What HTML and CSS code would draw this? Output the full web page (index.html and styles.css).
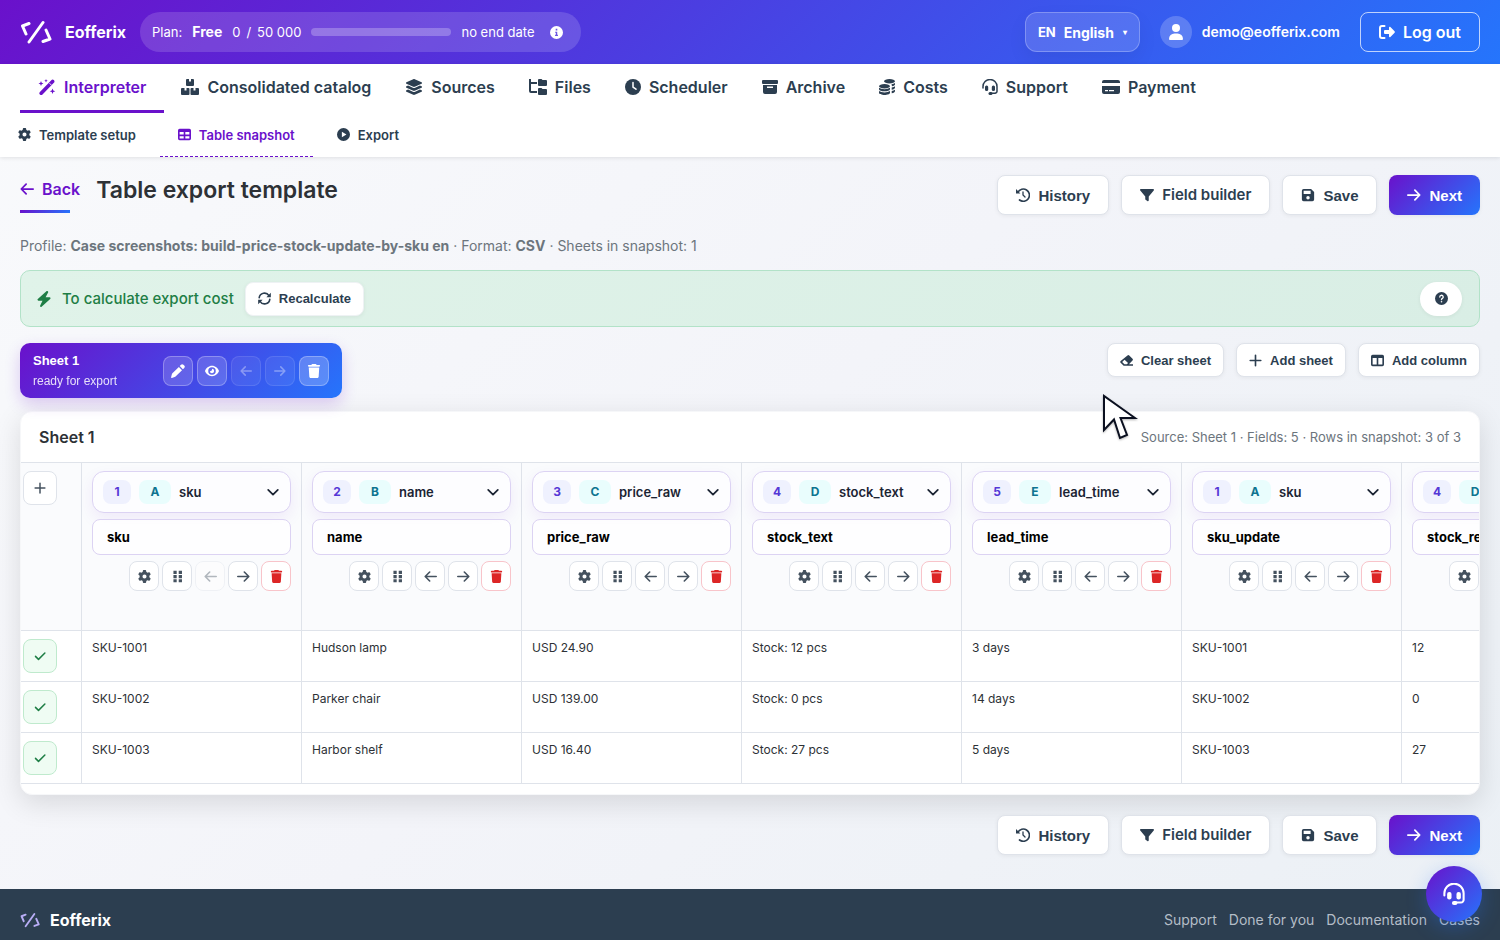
FILE: index.html
```html
<!DOCTYPE html>
<html lang="en">
<head>
    <meta charset="UTF-8">
    <meta name="viewport" content="width=device-width, initial-scale=1.0">
    <title>Table export template - Eofferix</title>
    <link rel="stylesheet" href="styles.css">
</head>
<body>
    <!-- Icon set -->
    <svg class="sprite" aria-hidden="true">
        <symbol id="i-logo" viewBox="0 0 32 24"><path d="M9 3.5L2.5 6L6 14M9 22L23 2.5M26 10L30 19L23 21.5" fill="none" stroke="currentColor" stroke-width="3" stroke-linecap="round" stroke-linejoin="round"/></symbol>
        <symbol id="i-wand" viewBox="0 0 18 16"><path d="M3.2 14.3L14.6 2.4" stroke="currentColor" stroke-width="3.6" stroke-linecap="round"/><path d="M11.6 4.3l1.6 1.6" stroke="#fff" stroke-width="1"/><path d="M3 2l.7 1.8 1.8.7-1.8.7L3 7l-.7-1.8L.5 4.5l1.8-.7zM8 0l.5 1.2 1.2.5-1.2.5L8 3.4l-.5-1.2-1.2-.5 1.2-.5zM14.5 9.5l.8 2 2 .8-2 .8-.8 2-.8-2-2-.8 2-.8z"/></symbol>
        <symbol id="i-boxes" viewBox="0 0 18 16"><path d="M5 1a1 1 0 0 1 1-1h2v2.5h2V0h2a1 1 0 0 1 1 1v5a1 1 0 0 1-1 1H6a1 1 0 0 1-1-1zM0 10a1 1 0 0 1 1-1h2.500v2.500h2V9H7.500a1 1 0 0 1 1 1v5a1 1 0 0 1-1 1H1a1 1 0 0 1-1-1zM9.500 10a1 1 0 0 1 1-1h2v2.500h2V9H17a1 1 0 0 1 1 1v5a1 1 0 0 1-1 1h-6.500a1 1 0 0 1-1-1z"/></symbol>
        <symbol id="i-layers" viewBox="0 0 576 512"><path d="M264.5 5.2c14.9-6.9 32.1-6.9 47 0l218.6 101c8.5 3.9 13.9 12.4 13.9 21.8s-5.4 17.9-13.9 21.8l-218.6 101c-14.9 6.9-32.1 6.9-47 0L45.9 149.8C37.4 145.8 32 137.3 32 128s5.4-17.9 13.9-21.8L264.5 5.2zM476.9 209.6l53.2 24.6c8.5 3.9 13.9 12.4 13.9 21.8s-5.4 17.9-13.9 21.8l-218.6 101c-14.9 6.9-32.1 6.9-47 0L45.9 277.8C37.4 273.8 32 265.3 32 256s5.4-17.9 13.9-21.8l53.2-24.6 152 70.2c23.4 10.8 50.4 10.8 73.8 0l152-70.2zm-152 198.2l152-70.2 53.2 24.6c8.5 3.9 13.9 12.4 13.9 21.8s-5.4 17.9-13.9 21.8l-218.6 101c-14.9 6.9-32.1 6.9-47 0L45.9 405.8C37.4 401.8 32 393.3 32 384s5.4-17.9 13.9-21.8l53.2-24.6 152 70.2c23.4 10.8 50.4 10.8 73.8 0z"/></symbol>
        <symbol id="i-tree" viewBox="0 0 18 16"><path d="M1 0v12a1 1 0 0 0 1 1h6M1 4h7" fill="none" stroke="currentColor" stroke-width="2"/><path d="M9 1a1 1 0 0 1 1-1h2.500l1 1H17a1 1 0 0 1 1 1v4a1 1 0 0 1-1 1h-7a1 1 0 0 1-1-1zM9 10a1 1 0 0 1 1-1h2.500l1 1H17a1 1 0 0 1 1 1v4a1 1 0 0 1-1 1h-7a1 1 0 0 1-1-1z"/></symbol>
        <symbol id="i-clock" viewBox="0 0 16 16"><circle cx="8" cy="8" r="8"/><path d="M8 3.500V8l3 2.200" fill="none" stroke="#fff" stroke-width="1.5" stroke-linecap="round"/></symbol>
        <symbol id="i-archive" viewBox="0 0 16 16"><rect y="1" width="16" height="4" rx="1"/><path fill-rule="evenodd" d="M1 6h14v7a2 2 0 0 1-2 2H3a2 2 0 0 1-2-2zM5 7.500v1.500h6V7.500z"/></symbol>
        <symbol id="i-coins" viewBox="0 0 16 16"><ellipse cx="10.5" cy="2.2" rx="5.5" ry="2.2"/><path d="M12.500 5.200c1.500-.2 2.700-.7 3.500-1.200v1.500c0 .8-1.200 1.500-3 1.800zM12.700 8.600c1.300-.3 2.500-.7 3.300-1.300v1.500c0 .8-1.300 1.600-3.300 2zM12.700 12c1.300-.3 2.500-.7 3.300-1.300v1.500c0 .8-1.300 1.600-3.300 2z"/><ellipse cx="5.5" cy="7.2" rx="5.5" ry="2.2"/><path d="M0 8.800c2.500 1.900 8.500 1.900 11 0v1.500c0 2.700-11 2.700-11 0zM0 12c2.500 1.900 8.500 1.900 11 0v1.800c0 2.900-11 2.900-11 0z"/></symbol>
        <symbol id="i-headset" viewBox="0 0 16 16"><path d="M1 9V7.500a7 7 0 0 1 14 0V12a2 2 0 0 1-2 2.200H9" fill="none" stroke="currentColor" stroke-width="1.5" stroke-linecap="round"/><rect x="3" y="6.500" width="3.200" height="5.500" rx="1.5"/><rect x="9.800" y="6.500" width="3.200" height="5.500" rx="1.5"/><rect x="6.500" y="13" width="4" height="3" rx="1.5"/></symbol>
        <symbol id="i-card" viewBox="0 0 18 16"><path fill-rule="evenodd" d="M2 1h14a2 2 0 0 1 2 2v1H0V3a2 2 0 0 1 2-2zM0 7h18v6a2 2 0 0 1-2 2H2a2 2 0 0 1-2-2zM3 11v1.200h3V11zM7 11v1.200h5V11z"/></symbol>
        <symbol id="i-gear" viewBox="0 0 512 512"><path d="M495.9 166.6c3.2 8.7 .5 18.4-6.4 24.6l-43.3 39.4c1.1 8.3 1.7 16.8 1.7 25.4s-.6 17.1-1.7 25.4l43.3 39.4c6.9 6.2 9.6 15.9 6.4 24.6c-4.4 11.9-9.7 23.3-15.8 34.3l-4.7 8.1c-6.6 11-14 21.4-22.1 31.2c-5.9 7.2-15.7 9.6-24.5 6.8l-55.7-17.7c-13.4 10.3-28.2 18.9-44 25.4l-12.5 57.1c-2 9.1-9 16.3-18.2 17.8c-13.8 2.3-28 3.5-42.5 3.5s-28.7-1.2-42.5-3.5c-9.2-1.5-16.2-8.7-18.2-17.8l-12.5-57.1c-15.8-6.5-30.6-15.1-44-25.4L83.1 425.9c-8.8 2.8-18.6 .3-24.5-6.8c-8.1-9.8-15.5-20.2-22.1-31.2l-4.7-8.1c-6.1-11-11.4-22.4-15.8-34.3c-3.2-8.7-.5-18.4 6.4-24.6l43.3-39.4C64.6 273.1 64 264.6 64 256s.6-17.1 1.7-25.4L22.4 191.2c-6.9-6.2-9.6-15.9-6.4-24.6c4.4-11.9 9.7-23.3 15.8-34.3l4.7-8.1c6.6-11 14-21.4 22.1-31.2c5.9-7.2 15.7-9.6 24.5-6.8l55.7 17.7c13.4-10.3 28.2-18.9 44-25.4l12.5-57.1c2-9.1 9-16.3 18.2-17.8C227.3 1.2 241.5 0 256 0s28.7 1.2 42.5 3.5c9.2 1.5 16.2 8.7 18.2 17.8l12.5 57.1c15.8 6.5 30.6 15.1 44 25.4l55.7-17.7c8.8-2.8 18.6-.3 24.5 6.8c8.1 9.8 15.5 20.2 22.1 31.2l4.7 8.1c6.1 11 11.4 22.4 15.8 34.3zM256 336a80 80 0 1 0 0-160 80 80 0 1 0 0 160z"/></symbol>
        <symbol id="i-table" viewBox="0 0 16 16"><path fill-rule="evenodd" d="M2 1h12a2 2 0 0 1 2 2v10a2 2 0 0 1-2 2H2a2 2 0 0 1-2-2V3a2 2 0 0 1 2-2zM2 5v3h5V5zM9 5v3h5V5zM2 10v3h5v-3zM9 10v3h5v-3z"/></symbol>
        <symbol id="i-columns" viewBox="0 0 16 16"><path fill-rule="evenodd" d="M2 1h12a2 2 0 0 1 2 2v10a2 2 0 0 1-2 2H2a2 2 0 0 1-2-2V3a2 2 0 0 1 2-2zM2 5v8h5V5zM9 5v8h5V5z"/></symbol>
        <symbol id="i-play" viewBox="0 0 16 16"><path fill-rule="evenodd" d="M8 0a8 8 0 1 1 0 16A8 8 0 0 1 8 0zM6 4.600v6.800L11.600 8z"/></symbol>
        <symbol id="i-left" viewBox="0 0 16 16"><path d="M15 8H2M7 2.500L1.500 8L7 13.500" fill="none" stroke="currentColor" stroke-width="2" stroke-linecap="round" stroke-linejoin="round"/></symbol>
        <symbol id="i-right" viewBox="0 0 16 16"><path d="M1 8h13M9 2.500L14.500 8L9 13.500" fill="none" stroke="currentColor" stroke-width="2" stroke-linecap="round" stroke-linejoin="round"/></symbol>
        <symbol id="i-history" viewBox="0 0 16 16"><path d="M2.200 4.800A7 7 0 1 1 4 13.700" fill="none" stroke="currentColor" stroke-width="1.9" stroke-linecap="round"/><path d="M0 1.200v5h5z"/><path d="M8 4.500V8l2.300 2.300" fill="none" stroke="currentColor" stroke-width="1.5" stroke-linecap="round"/></symbol>
        <symbol id="i-filter" viewBox="0 0 16 16"><path d="M1.200 1h13.600c1 0 1.500 1.100.9 1.900L10 9.700V14c0 .8-.9 1.300-1.600.8l-2-1.500a1 1 0 0 1-.4-.8V9.700L.3 2.900C-.3 2.100.2 1 1.200 1z"/></symbol>
        <symbol id="i-save" viewBox="0 0 16 16"><path fill-rule="evenodd" d="M3 1h8.500L15 4.500V13a2 2 0 0 1-2 2H3a2 2 0 0 1-2-2V3a2 2 0 0 1 2-2zM3 3.200v3.600h8V3.200zM8 9a2 2 0 1 0 0 4 2 2 0 0 0 0-4z"/></symbol>
        <symbol id="i-bolt" viewBox="0 0 14 16"><path d="M10.700.2c.5.300.6.800.4 1.300L8.600 6.300h4c.9 0 1.200 1 .6 1.600L4.600 15.700c-.9.700-1.900-.1-1.400-1.200L5.500 9.700H1.400c-.9 0-1.200-1-.6-1.600L9.400.3c.4-.4.900-.4 1.300-.1z"/></symbol>
        <symbol id="i-sync" viewBox="0 0 16 16"><path d="M1.500 7A6.500 6.500 0 0 1 13.500 4.500M14.500 9A6.500 6.500 0 0 1 2.500 11.500" fill="none" stroke="currentColor" stroke-width="2" stroke-linecap="round"/><path d="M15.800 1v5.500h-5.500zM.2 15V9.500h5.500z"/></symbol>
        <symbol id="i-help" viewBox="0 0 16 16"><circle cx="8" cy="8" r="8"/><path d="M5.900 6.200a2.100 2.100 0 1 1 3.200 1.700c-.8.400-1.100.8-1.100 1.500" fill="none" stroke="#fff" stroke-width="1.6" stroke-linecap="round"/><circle cx="8" cy="12" r="1" fill="#fff"/></symbol>
        <symbol id="i-info" viewBox="0 0 16 16"><path fill-rule="evenodd" d="M8 0a8 8 0 1 1 0 16A8 8 0 0 1 8 0zM7 3.500v2h2v-2zM6.300 7v1.400h.9v2.300h-1v1.500h3.600v-1.500h-.9V7z"/></symbol>
        <symbol id="i-pen" viewBox="0 0 16 16"><path d="M11.400.9a2 2 0 0 1 2.800 0l.9.900a2 2 0 0 1 0 2.800L13.600 6 10 2.400zM9 3.400L12.600 7l-7.400 7.300c-.3.300-.7.500-1.100.6L1 15.900c-.6.200-1.100-.4-.9-.9L1 11.800c.1-.4.300-.8.600-1.100z"/></symbol>
        <symbol id="i-eye" viewBox="0 0 16 16"><path fill-rule="evenodd" d="M8 2c3.800 0 6.700 2.800 7.900 5.600.1.300.1.500 0 .8C14.700 11.200 11.800 14 8 14S1.300 11.200.1 8.400a1 1 0 0 1 0-.8C1.300 4.800 4.200 2 8 2zM8 3.700a4.300 4.300 0 1 0 0 8.600 4.300 4.300 0 0 0 0-8.600zM8 5.500A2.500 2.500 0 1 1 5.500 8.200C7 8.500 8.300 7.200 8 5.500z"/></symbol>
        <symbol id="i-trash" viewBox="0 0 448 512"><path d="M135.2 17.7L128 32H32C14.3 32 0 46.3 0 64S14.3 96 32 96H416c17.7 0 32-14.3 32-32s-14.3-32-32-32H320l-7.2-14.3C307.4 6.8 296.3 0 284.2 0H163.8c-12.1 0-23.2 6.8-28.6 17.7zM416 128H32L53.2 467c1.6 25.3 22.6 45 47.9 45H346.9c25.3 0 46.3-19.7 47.9-45L416 128z"/></symbol>
        <symbol id="i-eraser" viewBox="0 0 16 16"><path fill-rule="evenodd" d="M9.200 1.800a1.600 1.600 0 0 1 2.200 0l4 4a1.600 1.600 0 0 1 0 2.200L11 12.500h5V14.500H4.500L.8 10.900a1.600 1.600 0 0 1 0-2.200zM5.600 7.200L2.700 9.800l2.700 2.700h3l1.500-1.300z"/></symbol>
        <symbol id="i-plus" viewBox="0 0 16 16"><path d="M8 1.500v13M1.500 8h13" stroke="currentColor" stroke-width="2" stroke-linecap="round"/></symbol>
        <symbol id="i-grip" viewBox="0 0 16 16"><path d="M3 1h4v3.800H3zM9.500 1h4v3.800h-4zM3 6.200h4V10H3zM9.500 6.200h4V10h-4zM3 11.400h4v3.800H3zM9.500 11.400h4v3.800h-4z"/></symbol>
        <symbol id="i-check" viewBox="0 0 16 16"><path d="M2 8.500l4 4L14.500 4" fill="none" stroke="currentColor" stroke-width="2" stroke-linecap="round" stroke-linejoin="round"/></symbol>
        <symbol id="i-chevron" viewBox="0 0 16 16"><path d="M2.500 5.500L8 11l5.500-5.500" fill="none" stroke="currentColor" stroke-width="2" stroke-linecap="round" stroke-linejoin="round"/></symbol>
        <symbol id="i-user" viewBox="0 0 16 16"><circle cx="8" cy="4" r="4"/><path d="M1 15a5.500 5.500 0 0 1 5.500-5.500h3A5.500 5.500 0 0 1 15 15a1 1 0 0 1-1 1H2a1 1 0 0 1-1-1z"/></symbol>
        <symbol id="i-logout" viewBox="0 0 16 16"><path d="M5.500 2H3a2 2 0 0 0-2 2v8a2 2 0 0 0 2 2h2.500" fill="none" stroke="currentColor" stroke-width="2" stroke-linecap="round"/><path d="M10 3.500c0-.8.800-1.100 1.400-.6l4.200 4.400c.4.400.4 1 0 1.400l-4.200 4.400c-.6.500-1.400.2-1.400-.6V10H6a1 1 0 0 1-1-1V7a1 1 0 0 1 1-1h4z"/></symbol>
    </svg>

    <header class="topbar">
        <a class="brand" href="#"><svg class="logo"><use href="#i-logo"/></svg>Eofferix</a>
        <div class="plan">
            <span>Plan:</span>
            <strong>Free</strong>
            <span class="usage"><span>0</span><span>/</span><span>50 000</span></span>
            <progress class="plan-bar" value="0" max="50000" aria-label="Plan usage"></progress>
            <span>no end date</span>
            <button class="plan-info" type="button" aria-label="Plan info"><svg class="icon"><use href="#i-info"/></svg></button>
        </div>
        <div class="account">
            <div class="lang">
                <label for="lang">EN</label>
                <select id="lang"><option>English</option></select>
                <span class="caret">▾</span>
            </div>
            <div class="user">
                <span class="avatar"><svg class="icon"><use href="#i-user"/></svg></span>
                <span>demo@eofferix.com</span>
            </div>
            <a class="logout" href="#"><svg class="icon"><use href="#i-logout"/></svg>Log out</a>
        </div>
    </header>

    <div class="menus">
        <nav class="main-nav">
            <a class="active" href="#"><svg class="icon wide"><use href="#i-wand"/></svg>Interpreter</a>
            <a href="#"><svg class="icon wide"><use href="#i-boxes"/></svg>Consolidated catalog</a>
            <a href="#"><svg class="icon wide"><use href="#i-layers"/></svg>Sources</a>
            <a href="#"><svg class="icon wide"><use href="#i-tree"/></svg>Files</a>
            <a href="#"><svg class="icon"><use href="#i-clock"/></svg>Scheduler</a>
            <a href="#"><svg class="icon"><use href="#i-archive"/></svg>Archive</a>
            <a href="#"><svg class="icon"><use href="#i-coins"/></svg>Costs</a>
            <a href="#"><svg class="icon"><use href="#i-headset"/></svg>Support</a>
            <a href="#"><svg class="icon wide"><use href="#i-card"/></svg>Payment</a>
        </nav>
        <nav class="sub-nav">
            <a href="#"><svg class="icon"><use href="#i-gear"/></svg>Template setup</a>
            <a class="active" href="#"><svg class="icon"><use href="#i-table"/></svg>Table snapshot</a>
            <a href="#"><svg class="icon"><use href="#i-play"/></svg>Export</a>
        </nav>
    </div>

    <main>
        <div class="page-head">
            <a class="back" href="#"><svg class="icon"><use href="#i-left"/></svg>Back</a>
            <h1>Table export template</h1>
            <div class="actions">
                <button class="btn" type="button"><svg class="icon"><use href="#i-history"/></svg>History</button>
                <a class="btn btn-link" href="#"><svg class="icon"><use href="#i-filter"/></svg>Field builder</a>
                <button class="btn" type="button"><svg class="icon"><use href="#i-save"/></svg>Save</button>
                <button class="btn btn-primary" type="button"><svg class="icon"><use href="#i-right"/></svg>Next</button>
            </div>
        </div>

        <p class="profile">Profile: <strong>Case screenshots: build-price-stock-update-by-sku en</strong> · Format: <strong>CSV</strong> · Sheets in snapshot: 1</p>

        <section class="cost">
            <svg class="icon"><use href="#i-bolt"/></svg>
            <span>To calculate export cost</span>
            <button class="btn btn-small" type="button"><svg class="icon"><use href="#i-sync"/></svg>Recalculate</button>
            <button class="help" type="button" aria-label="Help"><svg class="icon"><use href="#i-help"/></svg></button>
        </section>

        <div class="sheet-bar">
            <div class="sheet-tab">
                <div class="sheet-name">
                    <strong>Sheet 1</strong>
                    <span>ready for export</span>
                </div>
                <div class="sheet-tools">
                    <button type="button" aria-label="Rename"><svg class="icon"><use href="#i-pen"/></svg></button>
                    <button type="button" aria-label="Show"><svg class="icon"><use href="#i-eye"/></svg></button>
                    <button type="button" aria-label="Move left" disabled><svg class="icon"><use href="#i-left"/></svg></button>
                    <button type="button" aria-label="Move right" disabled><svg class="icon"><use href="#i-right"/></svg></button>
                    <button class="light" type="button" aria-label="Delete"><svg class="icon"><use href="#i-trash"/></svg></button>
                </div>
            </div>
            <div class="actions">
                <button class="btn btn-small" type="button"><svg class="icon"><use href="#i-eraser"/></svg>Clear sheet</button>
                <button class="btn btn-small" type="button"><svg class="icon"><use href="#i-plus"/></svg>Add sheet</button>
                <button class="btn btn-small" type="button"><svg class="icon"><use href="#i-columns"/></svg>Add column</button>
            </div>
        </div>

        <section class="card">
            <div class="card-head">
                <h2>Sheet 1</h2>
                <span>Source: Sheet 1 · Fields: 5 · Rows in snapshot: 3 of 3</span>
            </div>
            <div class="table-wrap">
                <table>
                    <thead>
                        <tr id="columns">
                            <th class="row-tool"><button class="square" type="button" aria-label="Add row"><svg class="icon"><use href="#i-plus"/></svg></button></th>
                        </tr>
                    </thead>
                    <tbody id="rows"></tbody>
                </table>
            </div>
        </section>

        <div class="actions bottom">
            <button class="btn" type="button"><svg class="icon"><use href="#i-history"/></svg>History</button>
            <a class="btn btn-link" href="#"><svg class="icon"><use href="#i-filter"/></svg>Field builder</a>
            <button class="btn" type="button"><svg class="icon"><use href="#i-save"/></svg>Save</button>
            <button class="btn btn-primary" type="button"><svg class="icon"><use href="#i-right"/></svg>Next</button>
        </div>
    </main>

    <footer>
        <a class="foot-brand" href="#"><svg class="logo"><use href="#i-logo"/></svg>Eofferix</a>
        <nav>
            <a href="#">Support</a>
            <a href="#">Done for you</a>
            <a href="#">Documentation</a>
            <a href="#">Cases</a>
        </nav>
    </footer>

    <button class="chat" type="button" aria-label="Support chat"><svg class="icon"><use href="#i-headset"/></svg></button>
    <svg class="pointer" viewBox="0 0 36 48" aria-hidden="true"><path d="M2 2V36L12 25.5L18 44L25 41L18.5 24H33Z" fill="#fff" stroke="#0b1020" stroke-width="2"/></svg>

    <script src="app.js"></script>
</body>
</html>
```

FILE: styles.css
```css
* {
    box-sizing: border-box;
}
body {
    margin: 0;
    min-height: 100vh;
    display: flex;
    flex-direction: column;
    font-family: Inter, sans-serif;
    font-size: 14px;
    line-height: 20px;
    color: #2d3136;
    background: linear-gradient(135deg, #f9fafc 0%, #f3f4f9 50%, #ebf0f5 100%);
}
a {
    color: inherit;
    text-decoration: none;
}
button, select, input {
    font-family: "Liberation Sans", Arial, sans-serif;
    margin: 0;
}
button {
    cursor: pointer;
}
.sprite {
    display: none;
}
.icon {
    width: 16px;
    height: 16px;
    flex: none;
    fill: currentColor;
}
.icon.wide {
    width: 18px;
}

/* Top bar */
.topbar {
    display: flex;
    align-items: center;
    gap: 14px;
    height: 64px;
    padding: 0 20px;
    color: #fff;
    background: linear-gradient(135deg, #6a11cb 0%, #2575fc 100%);
}
.brand, .foot-brand {
    display: flex;
    align-items: center;
    gap: 13px;
    font-size: 16px;
    font-weight: 700;
}
.logo {
    width: 32px;
    height: 24px;
}
.plan {
    display: flex;
    align-items: center;
    gap: 10px;
    height: 40px;
    padding: 0 12px;
    border-radius: 20px;
    background: rgba(255, 255, 255, 0.15);
    font-size: 13px;
}
.plan strong {
    font-size: 14px;
}
.usage {
    display: flex;
    gap: 6px;
}
.plan-bar {
    appearance: none;
    width: 140px;
    height: 8px;
    border: none;
    border-radius: 4px;
    overflow: hidden;
    background: rgba(255, 255, 255, 0.25);
}
.plan-bar::-webkit-progress-bar {
    background: transparent;
}
.plan-bar::-webkit-progress-value {
    background: #fff;
}
.plan-info {
    display: flex;
    padding: 6px;
    border: none;
    color: #fff;
    background: none;
}
.plan-info .icon {
    width: 13px;
    height: 13px;
}
.account {
    display: flex;
    align-items: center;
    gap: 20px;
    margin-left: auto;
    font-weight: 600;
}
.lang {
    display: flex;
    align-items: center;
    gap: 8px;
    height: 40px;
    padding: 0 12px;
    border: 1px solid rgba(255, 255, 255, 0.25);
    border-radius: 12px;
    background: rgba(255, 255, 255, 0.14);
    box-shadow: 0 8px 20px rgba(0, 0, 0, 0.06);
}
.lang label {
    font-size: 13px;
    font-weight: 700;
}
.lang select {
    appearance: none;
    padding: 0;
    border: none;
    color: #fff;
    background: none;
    font: 700 14px Inter, sans-serif;
}
.caret {
    font-size: 8px;
}
.user {
    display: flex;
    align-items: center;
    gap: 10px;
}
.avatar {
    display: flex;
    align-items: center;
    justify-content: center;
    width: 32px;
    height: 32px;
    border-radius: 50%;
    background: rgba(255, 255, 255, 0.2);
}
.logout {
    display: flex;
    align-items: center;
    gap: 8px;
    height: 40px;
    padding: 0 18px;
    border: 1px solid rgba(255, 255, 255, 0.7);
    border-radius: 8px;
    font-size: 16px;
}

/* Menus */
.menus {
    color: #2c3e50;
    background: #fff;
    box-shadow: 0 1px 4px rgba(0, 0, 0, 0.1);
}
.main-nav {
    display: flex;
    padding: 0 20px;
    font-size: 16px;
    font-weight: 600;
}
.main-nav a {
    display: flex;
    align-items: center;
    gap: 8px;
    height: 49px;
    padding: 0 17px;
    border-bottom: 3px solid transparent;
}
.main-nav .active {
    padding: 0 18px;
}
.sub-nav {
    display: flex;
    gap: 6px;
    font-size: 13px;
    font-weight: 600;
}
.sub-nav a {
    display: flex;
    align-items: center;
    gap: 8px;
    height: 44px;
    padding: 0 18px;
    border-bottom: 1px dashed transparent;
}
.sub-nav .icon {
    width: 13px;
    height: 13px;
}
.main-nav .active, .sub-nav .active {
    color: #6a11cb;
    border-bottom-color: #6a11cb;
}

/* Page head */
main {
    padding: 18px 20px 34px;
}
.page-head {
    display: flex;
    gap: 16px;
    min-height: 61px;
}
.back {
    display: flex;
    align-items: center;
    gap: 8px;
    align-self: flex-start;
    height: 38px;
    padding-bottom: 10px;
    color: #6a11cb;
    font-size: 16px;
    font-weight: 600;
    background: linear-gradient(135deg, #6a11cb, #2575fc) left bottom / 50px 3px no-repeat;
}
.back .icon {
    width: 14px;
    height: 14px;
}
h1 {
    margin: 0;
    font-size: 23px;
    line-height: 30px;
    font-weight: 600;
}
.actions {
    display: flex;
    gap: 12px;
    align-items: flex-start;
    margin-left: auto;
}
.btn {
    display: flex;
    align-items: center;
    gap: 8px;
    height: 40px;
    padding: 0 18px;
    border: 1px solid #dfe3ea;
    border-radius: 8px;
    color: #2c3e50;
    background: #fff;
    font-size: 15px;
    font-weight: 700;
    box-shadow: 0 1px 4px rgba(0, 0, 0, 0.06);
}
.btn .icon {
    width: 14px;
    height: 14px;
}
.btn-link {
    font-weight: 600;
}
.btn-primary {
    border: none;
    color: #fff;
    background: linear-gradient(135deg, #6a11cb, #2575fc);
}
.btn-small {
    height: 34px;
    padding: 0 12px;
    font-size: 13px;
}
.btn-small .icon {
    width: 13px;
    height: 13px;
}
.profile {
    margin: 0 0 14px;
    color: #6c757d;
}

/* Cost banner */
.cost {
    display: flex;
    align-items: center;
    gap: 11px;
    height: 57px;
    padding: 0 17px 0 16px;
    border: 1px solid #b2e2c8;
    border-radius: 10px;
    color: #1e7e45;
    background: linear-gradient(135deg, #e0f3e9, #d9eee5);
    font-size: 15px;
    font-weight: 500;
}
.cost > .icon {
    width: 14px;
}
.cost .btn {
    border-color: #eef2f4;
}
.help {
    display: flex;
    align-items: center;
    justify-content: center;
    width: 42px;
    height: 34px;
    margin-left: auto;
    border: none;
    border-radius: 17px;
    color: #2c3e50;
    background: #fff;
    box-shadow: 0 1px 4px rgba(0, 0, 0, 0.06);
}
.help .icon {
    width: 13px;
    height: 13px;
}

/* Sheets */
.sheet-bar {
    display: flex;
    margin: 16px 0 13px;
}
.sheet-tab {
    display: flex;
    align-items: center;
    justify-content: space-between;
    width: 322px;
    height: 55px;
    padding: 0 13px;
    border-radius: 10px;
    color: #fff;
    background: linear-gradient(135deg, #6a11cb, #2575fc);
    box-shadow: 0 6px 16px rgba(106, 17, 203, 0.2);
    font-family: "Liberation Sans", Arial, sans-serif;
    font-size: 12px;
}
.sheet-name {
    display: flex;
    flex-direction: column;
}
.sheet-name strong {
    font-size: 13px;
}
.sheet-name span {
    opacity: 0.85;
}
.sheet-tools, .col-tools {
    display: flex;
    gap: 4px;
}
.sheet-tools button {
    display: flex;
    align-items: center;
    justify-content: center;
    width: 30px;
    height: 30px;
    padding: 0;
    border: 1px solid rgba(255, 255, 255, 0.28);
    border-radius: 8px;
    color: #fff;
    background: rgba(255, 255, 255, 0.16);
}
.sheet-tools .light {
    background: rgba(255, 255, 255, 0.22);
}
.sheet-tools button:disabled {
    opacity: 0.4;
}
.sheet-tools .icon {
    width: 14px;
    height: 14px;
}
.sheet-tools button:disabled .icon {
    width: 12px;
}

/* Table card */
.card {
    padding-bottom: 10px;
    border: 1px solid #f6f7f9;
    border-radius: 12px;
    background: #fff;
    box-shadow: 0 8px 28px rgba(0, 0, 0, 0.12);
    overflow: hidden;
}
.card-head {
    display: flex;
    align-items: center;
    justify-content: space-between;
    height: 50px;
    padding: 0 18px;
    color: #6c757d;
    font-size: 13px;
}
.card-head h2 {
    margin: 0;
    color: #2d3136;
    font-size: 16px;
    font-weight: 600;
}
.table-wrap {
    border-top: 1px solid #dfe3ea;
    overflow: hidden;
}
table {
    width: 1601px;
    table-layout: fixed;
    border-collapse: separate;
    border-spacing: 0;
    font-size: 12px;
    line-height: 18px;
}
th, td {
    padding: 8px 10px;
    border-right: 1px solid #dfe3ea;
    border-bottom: 1px solid #dfe3ea;
    text-align: left;
    vertical-align: top;
}
th {
    width: 220px;
    height: 168px;
    background: #fafbfd;
    font-weight: 400;
}
td {
    height: 51px;
}
.row-tool {
    width: 61px;
    padding: 8px 2px;
}
.square, .col-tools button {
    display: flex;
    align-items: center;
    justify-content: center;
    width: 34px;
    height: 34px;
    padding: 0;
    border: 1px solid #dfe3ea;
    border-radius: 8px;
    color: #45525f;
    background: #fff;
}
.square .icon {
    width: 12px;
    height: 12px;
}
.square.ok {
    border-color: #bfeacd;
    color: #1e7e45;
    background: #effcf3;
}
.field {
    display: flex;
    align-items: center;
    gap: 8px;
    height: 42px;
    padding: 0 10px;
    border: 1px solid #dcd3f3;
    border-radius: 12px;
    color: #1b2433;
    background: #fdfdff;
    box-shadow: 0 6px 16px rgba(106, 17, 203, 0.07);
}
.badge {
    width: 28px;
    height: 24px;
    border-radius: 8px;
    color: #5538d6;
    background: #eff1fe;
    font-weight: 700;
    line-height: 24px;
    text-align: center;
}
.badge.letter {
    width: 32px;
    color: #0e7490;
    background: #e9fdfd;
}
.field select {
    appearance: none;
    flex: 1;
    min-width: 0;
    padding: 0;
    border: none;
    color: inherit;
    background: none;
    font: 600 13px Inter, sans-serif;
}
.field .icon {
    width: 14px;
    height: 14px;
    pointer-events: none;
}
.column-name {
    display: block;
    width: 100%;
    height: 36px;
    margin: 6px 0;
    padding: 0 14px;
    border: 1px solid #dcd3f3;
    border-radius: 8px;
    color: #000;
    background: rgba(255, 255, 255, 0.8);
    font: 700 13px Inter, sans-serif;
}
.col-tools {
    justify-content: flex-end;
    gap: 3px;
}
.col-tools button {
    width: 30px;
    height: 30px;
}
.col-tools button:disabled {
    opacity: 0.4;
}
.col-tools .icon {
    width: 13px;
    height: 13px;
}
.col-tools .remove {
    border-color: #f8c4ca;
    color: #dc2626;
}
.bottom {
    justify-content: flex-end;
    margin-top: 20px;
}

/* Footer */
footer {
    display: flex;
    justify-content: space-between;
    margin-top: auto;
    padding: 20px 20px 9px;
    color: #b4bdc7;
    background: #2c3e50;
    line-height: 22px;
}
.foot-brand {
    gap: 10px;
    color: #fff;
}
.foot-brand .logo {
    width: 20px;
    height: 16px;
    color: #b9adf5;
}
footer nav {
    display: flex;
    gap: 12px;
}
.chat {
    position: fixed;
    right: 18px;
    bottom: 18px;
    display: flex;
    align-items: center;
    justify-content: center;
    width: 56px;
    height: 56px;
    border: none;
    border-radius: 50%;
    color: #fff;
    background: linear-gradient(135deg, #6a11cb, #2575fc);
    box-shadow: 0 6px 20px rgba(37, 117, 252, 0.3);
}
.chat .icon {
    width: 22px;
    height: 22px;
}
.pointer {
    position: absolute;
    left: 1102px;
    top: 394px;
    width: 36px;
    height: 48px;
    filter: drop-shadow(0 1px 1px rgba(0, 0, 0, 0.3));
    pointer-events: none;
}
```

FILE: app.js
```javascript
// Columns of the snapshot: source field number, letter, source name, output name
const columns = [
    [1, 'A', 'sku', 'sku'],
    [2, 'B', 'name', 'name'],
    [3, 'C', 'price_raw', 'price_raw'],
    [4, 'D', 'stock_text', 'stock_text'],
    [5, 'E', 'lead_time', 'lead_time'],
    [1, 'A', 'sku', 'sku_update'],
    [4, 'D', 'stock_text', 'stock_remaining']
];

const rows = [
    ['SKU-1001', 'Hudson lamp', 'USD 24.90', 'Stock: 12 pcs', '3 days', 'SKU-1001', '12'],
    ['SKU-1002', 'Parker chair', 'USD 139.00', 'Stock: 0 pcs', '14 days', 'SKU-1002', '0'],
    ['SKU-1003', 'Harbor shelf', 'USD 16.40', 'Stock: 27 pcs', '5 days', 'SKU-1003', '27']
];

const icon = (name) => `<svg class="icon"><use href="#i-${name}"/></svg>`;

const head = document.getElementById('columns');
columns.forEach(([number, letter, source, name], index) => {
    head.insertAdjacentHTML('beforeend', `
        <th>
            <label class="field">
                <span class="badge">${number}</span>
                <span class="badge letter">${letter}</span>
                <select aria-label="Source field"><option>${source}</option></select>
                ${icon('chevron')}
            </label>
            <input class="column-name" type="text" aria-label="Column name" value="${name}">
            <div class="col-tools">
                <button type="button" aria-label="Settings">${icon('gear')}</button>
                <button type="button" aria-label="Drag">${icon('grip')}</button>
                <button type="button" aria-label="Move left" ${index === 0 ? 'disabled' : ''}>${icon('left')}</button>
                <button type="button" aria-label="Move right">${icon('right')}</button>
                <button class="remove" type="button" aria-label="Delete">${icon('trash')}</button>
            </div>
        </th>`);
});

const body = document.getElementById('rows');
rows.forEach((row) => {
    const cells = row.map((value) => `<td>${value}</td>`).join('');
    body.insertAdjacentHTML('beforeend', `<tr><td class="row-tool"><button class="square ok" type="button" aria-label="Row included">${icon('check')}</button></td>${cells}</tr>`);
});
```
